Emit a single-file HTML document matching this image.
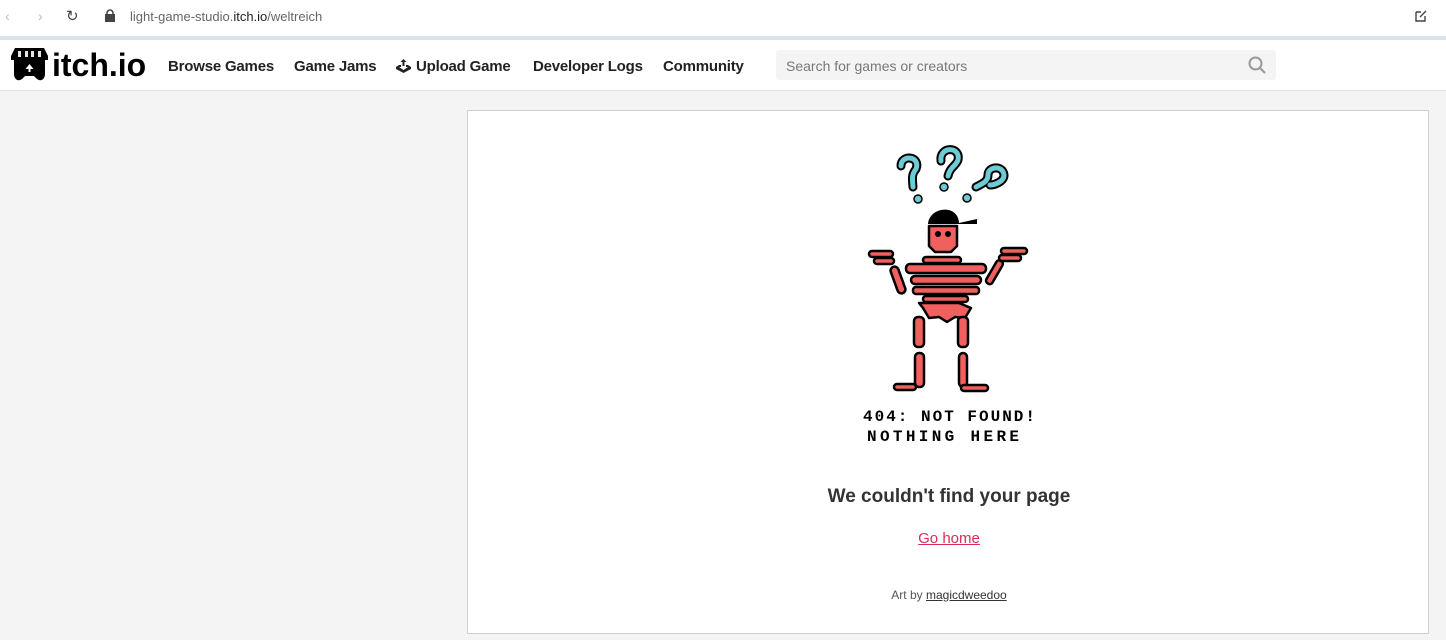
<!DOCTYPE html>
<html><head><meta charset="utf-8"><style>
*{margin:0;padding:0;box-sizing:border-box}
body{width:1446px;height:640px;overflow:hidden;background:#f4f4f4;font-family:"Liberation Sans",sans-serif;position:relative}
.chrome{position:absolute;left:0;top:0;width:1446px;height:36px;background:#fff}
.url{position:absolute;left:130px;top:9px;font-size:13px;color:#666}
.url b{font-weight:normal;color:#222}
.line{position:absolute;top:36px;left:0;width:1446px;height:4px;background:#dbe3ea}
.hdr{position:absolute;top:40px;left:0;width:1446px;height:51px;background:#fff;border-bottom:1px solid #e2e2e2}
.nav{position:absolute;top:18px;font-size:15px;font-weight:bold;color:#222;letter-spacing:-0.2px}
.logo{position:absolute;left:52px;top:7px;font-size:32px;font-weight:bold;color:#000;letter-spacing:0px}
.search{position:absolute;left:776px;top:10px;width:500px;height:30px;background:#f4f4f4;border-radius:3px;font-size:14px;color:#777;padding:8px 10px}
.card{position:absolute;left:467px;top:110px;width:962px;height:524px;background:#fff;border:1px solid #d0d0d0}
h2{position:absolute;left:0;width:962px;top:375px;text-align:center;font-size:19px;color:#333}
.home{position:absolute;left:0;width:962px;top:419px;text-align:center;font-size:15px;color:#da2c5a;text-decoration:underline}
.art{position:absolute;left:0;width:962px;top:477px;text-align:center;font-size:12px;color:#555}
.art u{color:#333}
</style></head><body>
<div class="chrome">
<span style="position:absolute;left:5px;top:8px;color:#bbb;font-size:14px">&lsaquo;</span>
<span style="position:absolute;left:38px;top:8px;color:#bbb;font-size:14px">&rsaquo;</span>
<span style="position:absolute;left:66px;top:7px;color:#444;font-size:15px">&#8635;</span>
<svg style="position:absolute;left:105px;top:9px" width="10" height="13"><rect x="0" y="5" width="10" height="8" fill="#444"/><path d="M2 6V4a3 3 0 0 1 6 0v2" stroke="#444" stroke-width="1.6" fill="none"/></svg>
<div class="url">light-game-studio.<b>itch.io</b>/weltreich</div>
<svg style="position:absolute;left:1414px;top:9px" width="14" height="14"><path d="M2 3h5M2 3v9h9V7M6 8l6-6" stroke="#444" stroke-width="1.4" fill="none"/></svg>
</div>
<div class="line"></div>
<div class="hdr">
<svg style="position:absolute;left:11px;top:7px" width="37" height="36" viewBox="0 0 37 36"><path d="M4 1h29l4 8v4H0V9z" fill="#000"/><path d="M3 13h31v14c0 5-4 8-8 5l-3-3h-9l-3 3c-4 3-8 0-8-5z" fill="#000"/><path d="M18.5 17l-4 5h3v3h2v-3h3z" fill="#fff"/><path d="M7 4h3v6H7zM14 4h3v6h-3zM20 4h3v6h-3zM27 4h3v6h-3z" fill="#fff" opacity=".9"/></svg>
<div class="logo">itch.io</div>
<div class="nav" style="left:168px">Browse Games</div>
<div class="nav" style="left:294px">Game Jams</div>
<svg style="position:absolute;left:395px;top:18px" width="17" height="16" viewBox="0 0 17 16"><path d="M8.5 1l-3 3h2v4h2V4h2z" fill="#222"/><path d="M1 9l3-2h2v2H4l4.5 3L13 9h-2V7h2l3 2v2l-7.5 4L1 11z" fill="#222"/></svg>
<div class="nav" style="left:416px">Upload Game</div>
<div class="nav" style="left:533px">Developer Logs</div>
<div class="nav" style="left:663px">Community</div>
<div class="search">Search for games or creators
<svg style="position:absolute;right:10px;top:6px" width="18" height="18"><circle cx="7.5" cy="7.5" r="6" stroke="#999" stroke-width="2" fill="none"/><path d="M12 12l5 5" stroke="#999" stroke-width="2"/></svg></div>
</div>
<div class="card">
<svg style="position:absolute;left:383px;top:20px" width="200" height="320" viewBox="850 130 200 320">
<g fill="none" stroke="#000" stroke-width="9" stroke-linecap="round">
<path d="M900 165c0-12 20-10 15 3-4 5-4 8-3 18"/><path d="M940 160c-2-15 20-15 17-1-2 6-8 7-10 16"/><path d="M975 186c8-4 12-6 12-12 0-9 15-10 16 0 0 7-10 10-14 10"/>
</g>
<g fill="none" stroke="#6ccbd4" stroke-width="5" stroke-linecap="round">
<path d="M900 165c0-12 20-10 15 3-4 5-4 8-3 18"/><path d="M940 160c-2-15 20-15 17-1-2 6-8 7-10 16"/><path d="M975 186c8-4 12-6 12-12 0-9 15-10 16 0 0 7-10 10-14 10"/>
</g>
<g fill="#6ccbd4" stroke="#000" stroke-width="1.5"><circle cx="917" cy="198" r="4"/><circle cx="943" cy="186" r="4"/><circle cx="966" cy="197" r="4"/></g>
<g stroke="#000" stroke-width="2.5" fill="#f0605e" stroke-linejoin="round">
<path d="M928 225h28v20l-6 6h-16l-6-6z"/>
<rect x="922" y="256" width="38" height="6" rx="3"/><rect x="905" y="263" width="80" height="9" rx="4"/><rect x="910" y="275" width="70" height="8" rx="4"/><rect x="912" y="286" width="66" height="7" rx="3"/><rect x="922" y="295" width="45" height="6" rx="3"/>
<path d="M918 302h40l12 5-6 10-10-1-8 5-8-5-10 1-6-10z"/>
<rect x="913" y="316" width="10" height="30" rx="4"/><rect x="914" y="352" width="9" height="34" rx="4"/><rect x="957" y="316" width="10" height="30" rx="4"/><rect x="958" y="352" width="8" height="34" rx="4"/>
<rect x="893" y="383" width="22" height="6" rx="3"/><rect x="960" y="384" width="27" height="6" rx="3"/>
<rect x="893" y="265" width="8" height="28" rx="4" transform="rotate(-20 897 279)"/><rect x="990" y="258" width="7" height="26" rx="3" transform="rotate(30 993 271)"/>
<rect x="868" y="250" width="24" height="6" rx="3"/><rect x="873" y="257" width="20" height="6" rx="3"/><rect x="1000" y="247" width="26" height="6" rx="3"/><rect x="998" y="254" width="22" height="6" rx="3"/>
</g>
<path d="M927 224c0-18 30-22 31-2l18-4v5h-49z" fill="#000"/>
<g fill="#000"><circle cx="937" cy="233" r="3"/><circle cx="947" cy="233" r="3"/></g>
<text x="862" y="420" font-family="Liberation Mono,monospace" font-weight="bold" font-size="16" fill="#000" textLength="172">404: NOT FOUND!</text>
<text x="866" y="440" font-family="Liberation Mono,monospace" font-weight="bold" font-size="16" fill="#000" textLength="152">NOTHING HERE</text>
</svg>
<h2>We couldn't find your page</h2>
<div class="home">Go home</div>
<div class="art">Art by <u>magicdweedoo</u></div>
</div>
</body></html>
